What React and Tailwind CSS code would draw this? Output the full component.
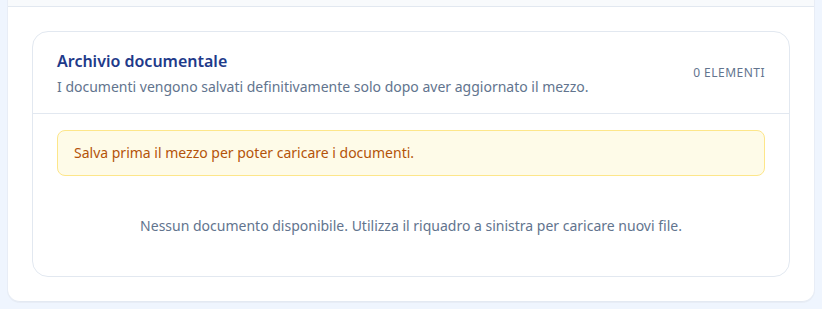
import React from 'react';

function DocumentArchive({ items = [] }) {
  return (
    <div className="rounded-2xl border border-slate-200 bg-white">
      <div className="flex items-center justify-between border-b border-slate-200 px-6 pt-[17px] pb-4">
        <div>
          <h3 className="text-base font-semibold leading-6 text-[#1e3a8a]">Archivio documentale</h3>
          <p className="mt-1 text-sm leading-5 text-slate-500">
            I documenti vengono salvati definitivamente solo dopo aver aggiornato il mezzo.
          </p>
        </div>
        <span className="text-xs tracking-[0.04em] text-slate-500 uppercase">{items.length} elementi</span>
      </div>
      <div className="px-6 pt-4">
        <div className="rounded-lg border border-[#fde68a] bg-[#fefbe8] px-4 py-3 text-sm leading-5 text-[#b45309]">
          Salva prima il mezzo per poter caricare i documenti.
        </div>
        <p className="py-10 text-center text-sm leading-5 text-slate-500">
          Nessun documento disponibile. Utilizza il riquadro a sinistra per caricare nuovi file.
        </p>
      </div>
    </div>
  );
}

export default function App() {
  return (
    <div
      className="min-h-screen bg-[#eff5fe] px-2 pb-2"
      style={{ fontFamily: '"Noto Sans", "Open Sans", sans-serif' }}
    >
      <div className="overflow-hidden rounded-b-xl border-b border-[#e3e9f2] bg-white shadow-[0_0_0_1px_rgba(226,232,240,0.6)]">
        <div className="h-[7px] border-b border-slate-200 bg-slate-50" />
        <div className="px-6 pt-6 pb-6">
          <DocumentArchive />
        </div>
      </div>
    </div>
  );
}
